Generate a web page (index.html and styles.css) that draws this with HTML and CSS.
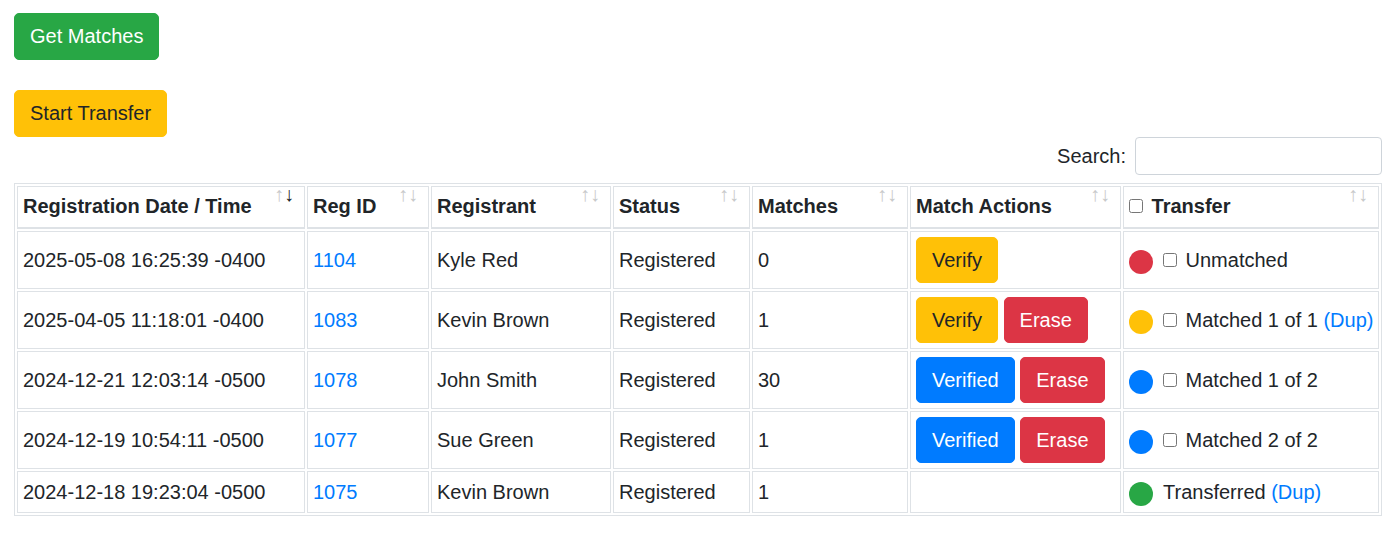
FILE: index.html
```html
<!DOCTYPE html>
<html lang="en">
<head>
<meta charset="utf-8">
<title>Matches</title>
<link rel="stylesheet" href="styles.css">
</head>
<body>
<div class="page">
  <div class="actions">
    <button class="btn btn-success">Get Matches</button>
    <button class="btn btn-warning">Start Transfer</button>
  </div>
  <div class="filter">
    <label>Search:<input type="search" class="search-input"></label>
  </div>
  <table class="grid">
    <thead>
      <tr>
        <th class="c1 sort-desc">Registration Date / Time</th>
        <th class="c2">Reg ID</th>
        <th class="c3">Registrant</th>
        <th class="c4">Status</th>
        <th class="c5">Matches</th>
        <th class="c6">Match Actions</th>
        <th class="c7"><input type="checkbox" class="cb"> Transfer</th>
      </tr>
    </thead>
    <tbody>
      <tr>
        <td>2025-05-08 16:25:39 -0400</td>
        <td><a href="#">1104</a></td>
        <td>Kyle Red</td>
        <td>Registered</td>
        <td>0</td>
        <td><button class="btn btn-warning">Verify</button></td>
        <td><span class="dot dot-red"></span><input type="checkbox" class="cb"> Unmatched</td>
      </tr>
      <tr>
        <td>2025-04-05 11:18:01 -0400</td>
        <td><a href="#">1083</a></td>
        <td>Kevin Brown</td>
        <td>Registered</td>
        <td>1</td>
        <td><button class="btn btn-warning">Verify</button> <button class="btn btn-danger">Erase</button></td>
        <td><span class="dot dot-yellow"></span><input type="checkbox" class="cb"> Matched 1 of 1 <a href="#">(Dup)</a></td>
      </tr>
      <tr>
        <td>2024-12-21 12:03:14 -0500</td>
        <td><a href="#">1078</a></td>
        <td>John Smith</td>
        <td>Registered</td>
        <td>30</td>
        <td><button class="btn btn-primary">Verified</button> <button class="btn btn-danger">Erase</button></td>
        <td><span class="dot dot-blue"></span><input type="checkbox" class="cb"> Matched 1 of 2</td>
      </tr>
      <tr>
        <td>2024-12-19 10:54:11 -0500</td>
        <td><a href="#">1077</a></td>
        <td>Sue Green</td>
        <td>Registered</td>
        <td>1</td>
        <td><button class="btn btn-primary">Verified</button> <button class="btn btn-danger">Erase</button></td>
        <td><span class="dot dot-blue"></span><input type="checkbox" class="cb"> Matched 2 of 2</td>
      </tr>
      <tr>
        <td>2024-12-18 19:23:04 -0500</td>
        <td><a href="#">1075</a></td>
        <td>Kevin Brown</td>
        <td>Registered</td>
        <td>1</td>
        <td></td>
        <td><span class="dot dot-green"></span>Transferred <a href="#">(Dup)</a></td>
      </tr>
    </tbody>
  </table>
</div>
</body>
</html>
```

FILE: styles.css
```css
html, body {
  margin: 0;
  padding: 0;
  background: #fff;
}
body {
  font-family: "Liberation Sans", Arial, sans-serif;
  font-size: 20px;
  line-height: 30px;
  color: #212529;
}
.page {
  padding: 13px 13px 0 14px;
}
.actions {
  display: flex;
  flex-direction: column;
  align-items: flex-start;
  gap: 30px;
}
.btn {
  display: inline-block;
  box-sizing: border-box;
  font-family: inherit;
  font-size: 20px;
  line-height: 30px;
  font-weight: 400;
  padding: 7px 15px 8px;
  border: 1px solid transparent;
  border-radius: 5px;
  margin: 0;
  cursor: pointer;
}
.btn-success { background: #28a745; border-color: #28a745; color: #fff; }
.btn-warning { background: #ffc107; border-color: #ffc107; color: #212529; }
.btn-danger { background: #dc3545; border-color: #dc3545; color: #fff; }
.btn-primary { background: #007bff; border-color: #007bff; color: #fff; }

.filter {
  display: flex;
  justify-content: flex-end;
  align-items: flex-start;
  height: 40px;
}
.filter label {
  display: flex;
  align-items: center;
  font-weight: 400;
}
.search-input {
  box-sizing: border-box;
  width: 247px;
  height: 38px;
  margin: 0 0 0 9px;
  padding: 5px 10px;
  font-family: inherit;
  font-size: 17.5px;
  border: 1px solid #ced4da;
  border-radius: 4px;
  background: #fff;
  color: #495057;
}

.grid {
  margin-top: 6px;
  width: 100%;
  table-layout: fixed;
  border-collapse: separate;
  border-spacing: 2px;
  border: 1px solid #dee2e6;
}
.grid th, .grid td {
  box-sizing: content-box;
  border: 1px solid #dee2e6;
  padding: 5px;
  text-align: left;
  white-space: nowrap;
  overflow: hidden;
}
.grid th {
  position: relative;
  font-weight: 700;
  vertical-align: bottom;
  border-bottom-width: 2px;
  padding: 4px 30px 6px 5px;
}
.grid td {
  vertical-align: middle;
}
.grid th::before,
.grid th::after {
  position: absolute;
  bottom: 18px;
  line-height: 30px;
  font-weight: 400;
  color: #c8c9ca;
  font-family: "Liberation Sans", "DejaVu Sans", sans-serif;
  font-variant-emoji: text;
}
.grid th::before {
  content: "\2191\FE0E";
  right: 20px;
}
.grid th::after {
  content: "\2193\FE0E";
  right: 10px;
}
.grid th.sort-desc::after {
  color: #212529;
}
.c1 { width: 251px; }
.c2 { width: 85px; }
.c3 { width: 143px; }
.c4 { width: 100px; }
.c5 { width: 119px; }
.c6 { width: 174px; }

.grid td .btn {
  padding: 7px 15px;
  vertical-align: top;
}
a {
  color: #007bff;
  text-decoration: none;
}
.dot {
  display: inline-block;
  width: 24px;
  height: 24px;
  border-radius: 50%;
  vertical-align: middle;
  margin-right: 10px;
}
.dot-red { background: #dc3545; }
.dot-yellow { background: #ffc107; }
.dot-blue { background: #007bff; }
.dot-green { background: #28a745; }
.cb {
  width: 14px;
  height: 14px;
  margin: 3px 3px 3px 0;
}
```
